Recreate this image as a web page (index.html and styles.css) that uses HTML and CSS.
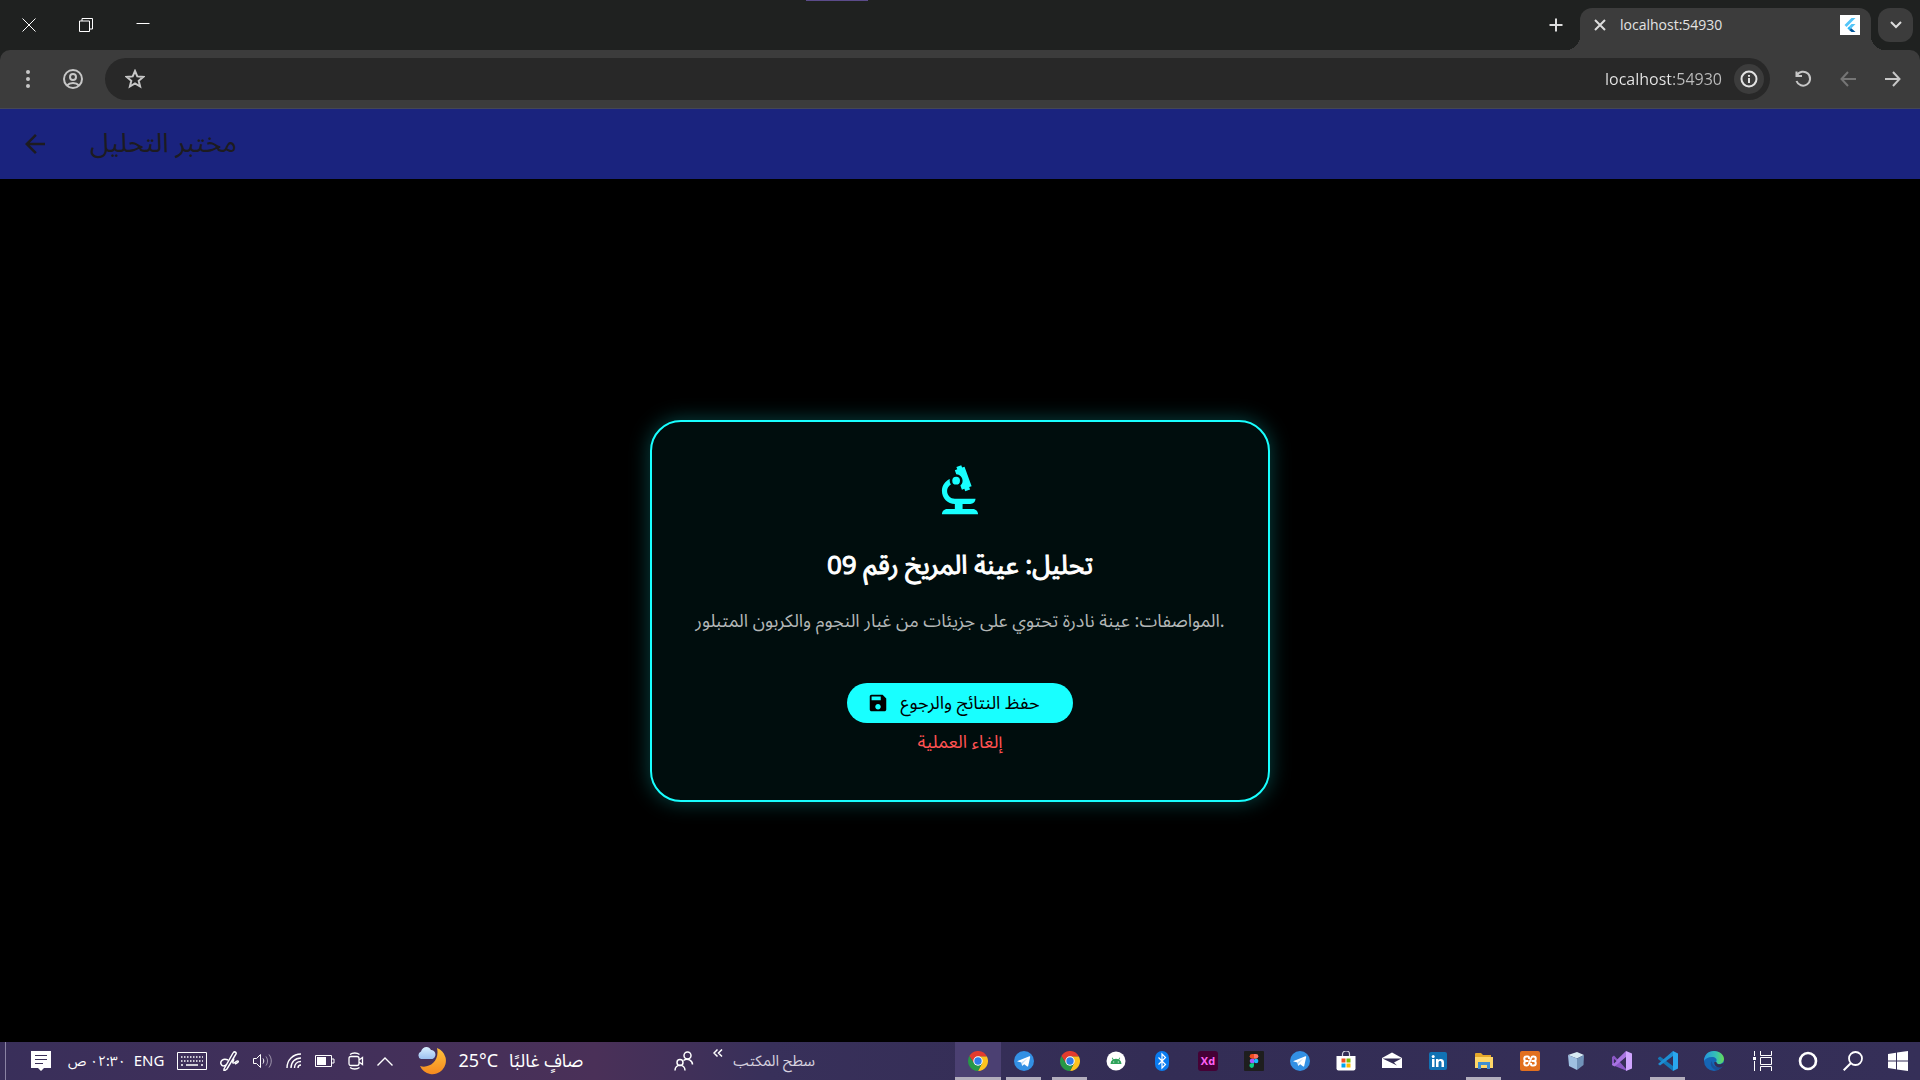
FILE: index.html
```html
<!DOCTYPE html>
<html lang="ar">
<head>
<meta charset="utf-8">
<title>مختبر التحليل</title>
<link rel="stylesheet" href="styles.css">
</head>
<body>
<svg class="defs" aria-hidden="true">
  <symbol id="chrome" viewBox="0 0 20 20">
    <path d="M10 5.4h8.9A10 10 0 0 0 1.34 5L6 12.3z" fill="#e33b2e"/>
    <path d="M14 12.3 10 20A10 10 0 0 0 18.9 5.4H10z" fill="#fcc31e"/>
    <path d="M6 12.3 1.34 5A10 10 0 0 0 10 20l4-7.700z" fill="#279847"/>
    <circle cx="10" cy="10" r="4.7" fill="#fff"/><circle cx="10" cy="10" r="3.7" fill="#2f7de8"/>
  </symbol>
  <symbol id="telegram" viewBox="0 0 20 20">
    <circle cx="10" cy="10" r="10" fill="#3390e4"/>
    <path d="M3.6 10 15.4 5.2c.5-.2.9.1.8.7l-2 9c-.1.6-.5.8-1 .5l-3-2.2-1.500 1.400c-.3.3-.6.2-.7-.2l-.7-3-3.600-.8c-.5-.1-.5-.4-.1-.6z" fill="#fff"/>
    <path d="m7.600 11.300 6-4.100-4.700 5-.3 1.900z" fill="#bfdcf5"/>
  </symbol>
</svg>

<header class="browser">
  <div class="titlebar">
    <button class="win" aria-label="إغلاق"><svg viewBox="0 0 14 14" width="14" height="14"><path d="M.5.5l13 13M13.500.5l-13 13"/></svg></button>
    <button class="win" aria-label="استعادة"><svg viewBox="0 0 14 14" width="14" height="14"><path d="M.5 3h10v10.500H.5zM3 3V.5h10.500V11h-3"/></svg></button>
    <button class="win" aria-label="تصغير"><svg viewBox="0 0 14 14" width="14" height="14"><path d="M.5 5.500h13"/></svg></button>
    <span class="accent"></span>
    <button class="newtab" aria-label="علامة تبويب جديدة"><svg viewBox="0 0 14 14" width="14" height="14"><path d="M7 .5v13M.5 7h13"/></svg></button>
    <div class="tab">
      <button class="tabclose" aria-label="إغلاق علامة التبويب"><svg viewBox="0 0 12 12" width="12" height="12"><path d="M1 1l10 10M11 1L1 11"/></svg></button>
      <span class="tabname">localhost:54930</span>
      <svg class="favicon" viewBox="0 0 20 20" width="20" height="20"><path fill="#fff" d="M0 0h20v20H0z"/><path fill="#54c5f8" d="M11.500 3h4L6.500 12l-2-2zM11.500 9h4l-4.200 4.200-2-2z"/><path fill="#29b6f6" d="m7.300 13.200 2-2 2 2-2 2z"/><path fill="#01579b" d="m9.300 15.200 2-2 4.200 3.800h-4z"/></svg>
    </div>
    <button class="tabsearch" aria-label="البحث في علامات التبويب"><svg viewBox="0 0 12 8" width="12" height="8"><path d="M1 1l5 5 5-5"/></svg></button>
  </div>
  <div class="toolbar">
    <button class="tool" aria-label="القائمة"><svg viewBox="0 0 20 20" width="20" height="20"><g fill="currentColor"><circle cx="10" cy="3" r="2"/><circle cx="10" cy="10" r="2"/><circle cx="10" cy="17" r="2"/></g></svg></button>
    <button class="tool" aria-label="الملف الشخصي"><svg class="line" viewBox="0 0 20 20" width="20" height="20"><circle cx="10" cy="10" r="9"/><circle cx="10" cy="8" r="3"/><path d="M4 16.500c3-3.300 9-3.300 12 0"/></svg></button>
    <div class="omnibox">
      <button class="star" aria-label="إضافة إشارة"><svg class="line" viewBox="0 0 20 20" width="20" height="20"><path d="m10 2 2.300 5.400 5.900.5-4.500 3.900 1.400 5.700-5.100-3.100-5.100 3.100 1.400-5.700L1.800 7.900l5.900-.5z"/></svg></button>
      <input class="url" aria-label="العنوان" dir="ltr" value="localhost:54930">
      <button class="info" aria-label="معلومات الموقع"><svg class="line" viewBox="0 0 18 18" width="18" height="18"><circle cx="9" cy="9" r="7.500"/><path d="M9 8v5M9 5v1.800"/></svg></button>
    </div>
    <button class="tool" aria-label="إعادة التحميل"><svg class="line" viewBox="0 0 18 18" width="18" height="18"><path d="M3 5.200A7 7 0 1 1 2.500 11M2.500 1.500v4.500H8"/></svg></button>
    <button class="tool dim" aria-label="التالي"><svg class="line" viewBox="0 0 16 16" width="16" height="16"><path d="M16 8H2M8 1L1.500 8 8 15"/></svg></button>
    <button class="tool" aria-label="رجوع"><svg class="line" viewBox="0 0 16 16" width="16" height="16"><path d="M0 8h14M8 1l6.500 7L8 15"/></svg></button>
  </div>
</header>

<header class="appbar">
  <button class="back" aria-label="رجوع"><svg viewBox="0 0 24 24" width="30" height="30"><path fill="currentColor" d="M20 11H7.830l5.590-5.590L12 4l-8 8 8 8 1.410-1.410L7.830 13H20z"/></svg></button>
  <h1>مختبر التحليل</h1>
</header>

<main class="lab">
  <section class="card">
    <svg class="biotech" viewBox="0 0 24 24" width="62" height="62" fill="currentColor"><path d="M7 19c-1.100 0-2 .9-2 2h14c0-1.100-.9-2-2-2h-4v-2h3c1.100 0 2-.9 2-2h-8c-1.660 0-3-1.340-3-3 0-1.090.59-2.040 1.460-2.560C8.170 9.030 8 8.540 8 8c0-.21.04-.42.09-.62C6.280 8.130 5 9.920 5 12c0 2.760 2.240 5 5 5v2H7z"/><path d="M10.560 5.510C11.910 5.540 13 6.640 13 8c0 .75-.33 1.410-.85 1.870l.59 1.620.94-.34.34.94 1.880-.68-.34-.94.94-.34L13.760 2.600l-.94.34L12.480 2l-1.880.68.34.94-.94.350.56 1.540z"/><circle cx="10.500" cy="8" r="1.500"/></svg>
    <h2>تحليل: عينة المريخ رقم 09</h2>
    <p>المواصفات: عينة نادرة تحتوي على جزيئات من غبار النجوم والكربون المتبلور.</p>
    <button class="save"><svg viewBox="0 0 24 24" width="22" height="22"><path fill="currentColor" d="M17 3H5c-1.110 0-2 .9-2 2v14c0 1.100.89 2 2 2h14c1.100 0 2-.9 2-2V7l-4-4zm-5 16c-1.660 0-3-1.340-3-3s1.340-3 3-3 3 1.340 3 3-1.340 3-3 3zm3-10H5V5h10v4z"/></svg><span>حفظ النتائج والرجوع</span></button>
    <button class="cancel">إلغاء العملية</button>
  </section>
</main>

<footer class="taskbar">
  <div class="tray">
    <button aria-label="الإشعارات"><svg viewBox="0 0 20 20" width="20" height="20"><path fill="#fff" d="M0 0h20v17h-7l-3 3-3-3H0z"/><path stroke="#3a2f58" d="M4 4.500h12M4 8.500h12M4 12.500h8"/></svg></button>
    <div class="clock"><time dir="rtl">٠٢:٣٠ ص</time><span>ENG</span></div>
    <button aria-label="لوحة المفاتيح"><svg class="thin" viewBox="0 0 30 18" width="30" height="18"><path d="M.5.5h29v17H.5z"/><path stroke-width="1.500" stroke-dasharray="1.500 1.500" d="M4 5h22M4 9h22"/><path stroke-width="1.500" d="M4 13h2M9 13h12M24 13h2"/></svg></button>
    <button aria-label="القلم"><svg class="thin" viewBox="0 0 20 20" width="20" height="20"><path stroke-width="1.500" d="M4 18 13 2c1-2 4-1 3 1L7 18l-3 2zM8 9c-5-2-8 1-7 4s4 2 6 0M13 7c2 1-1 4 0 5s4-3 5-2-1 2-3 3"/></svg></button>
    <button aria-label="الصوت"><svg class="thin" viewBox="0 0 20 16" width="20" height="16"><path d="M.5 5.500h3l4-4v13l-4-4h-3z"/><path d="M10 5.500c1 1.500 1 3.500 0 5"/><path opacity=".5" d="M13 3.500c2 3 2 6 0 9M16 1.500c3 4 3 9 0 13"/></svg></button>
    <button aria-label="الشبكة"><svg class="thin" viewBox="0 0 16 16" width="16" height="16"><path stroke-width="1.400" d="M1 15C1 7 7 1 15 1M5 15C5 9 9 5 15 5M8.500 15c0-4 2.500-6.500 6.500-6.500M12 15c0-2 1-3 3-3"/></svg></button>
    <button aria-label="البطارية"><svg class="thin" viewBox="0 0 20 12" width="20" height="12"><path d="M.5.5h16v11H.5zM17 4h2v4h-2"/><path fill="#fff" stroke="none" d="M2 2h9v8H2z"/></svg></button>
    <button aria-label="الكاميرا"><svg class="thin" viewBox="0 0 16 18" width="16" height="18"><path stroke-width="1.300" d="M3 4.500h6q2 0 2 2v5q0 2-2 2H3q-2 0-2-2v-5q0-2 2-2zM11 8l3.500-2.500v7L11 10M2 2.500c2.500-2 7-2 9.500 0M2 15.500c2.500 2 7 2 9.500 0"/></svg></button>
    <button aria-label="إظهار الرموز المخفية"><svg class="thin" viewBox="0 0 16 9" width="16" height="9"><path stroke-width="1.400" d="M.5 8.500 8 1l7.500 7.500"/></svg></button>
  </div>
  <button class="weather">
    <svg viewBox="0 0 30 30" width="30" height="30"><defs><linearGradient id="moon" x1="0" y1="0" x2="0" y2="1"><stop offset="0" stop-color="#ffc23c"/><stop offset="1" stop-color="#f58a1f"/></linearGradient><linearGradient id="cloud" x1="0" y1="0" x2="0" y2="1"><stop offset="0" stop-color="#d9efff"/><stop offset="1" stop-color="#9cc0f0"/></linearGradient></defs><path fill="url(#moon)" d="M20 2a13.500 13.500 0 1 1-17 18c9 3 20-5 17-18z"/><path fill="url(#cloud)" d="M4 13a4 4 0 0 1 0-7.500C5 .5 12-1 14 4c4-.5 6 5 3 8-1 1-2 1-3 1z"/></svg>
    <span>25°C</span><span class="sky" dir="rtl">صافٍ غالبًا</span>
  </button>
  <div class="desk">
    <button aria-label="الأشخاص"><svg class="thin" viewBox="0 0 20 20" width="20" height="20"><g stroke-width="1.500"><circle cx="13.500" cy="4.500" r="3.500"/><circle cx="6" cy="11.500" r="3"/><path d="M1 19.500c0-7 10-7 10 0M9.500 9.500c4-3 9 0 9 4"/></g></svg></button>
    <button class="more" aria-label="المزيد"><svg class="thin" viewBox="0 0 10 8" width="10" height="8"><path stroke-width="1.500" d="M4.500.5 1 4l3.500 3.500M9 .5 5.500 4 9 7.500"/></svg></button>
    <span>سطح المكتب</span>
  </div>
  <nav class="apps">
    <button class="open active" aria-label="Chrome"><svg width="20" height="20"><use href="#chrome"/></svg></button>
    <button class="open" aria-label="Telegram"><svg width="20" height="20"><use href="#telegram"/></svg></button>
    <button class="open" aria-label="Chrome 2"><svg width="20" height="20"><use href="#chrome"/></svg></button>
    <button aria-label="Android"><svg viewBox="0 0 20 20" width="20" height="20"><circle cx="10" cy="10" r="9.500" fill="#fff"/><path fill="#2fa35b" d="M4.500 13a5.500 5.500 0 0 1 2.200-4.400L5.800 7l.7-.4 1 1.600a6 6 0 0 1 5 0l1-1.600.7.4-.9 1.600a5.500 5.500 0 0 1 2.200 4.400z"/><path fill="#fff" d="M7.200 10.500h1v1h-1zM11.800 10.500h1v1h-1z"/></svg></button>
    <button aria-label="Bluetooth"><svg viewBox="0 0 20 20" width="20" height="20"><rect x="3" width="14" height="20" rx="7" fill="#0a7cf0"/><path fill="none" stroke="#fff" stroke-width="1.200" d="m6.500 6.500 7 7-3.500 3.500V3l3.500 3.500-7 7"/></svg></button>
    <button aria-label="Adobe XD"><svg viewBox="0 0 20 20" width="20" height="20"><rect width="20" height="20" rx="3" fill="#450135"/><text x="10" y="14" class="xd">Xd</text></svg></button>
    <button aria-label="Figma"><svg viewBox="0 0 20 20" width="20" height="20"><rect width="20" height="20" rx="1" fill="#1e1e1e"/><path fill="#f24e1e" d="M10 3H8a2.300 2.300 0 0 0 0 4.700h2z"/><path fill="#ff7262" d="M10 3h2a2.300 2.300 0 0 1 0 4.700h-2z"/><path fill="#a259ff" d="M10 7.700H8a2.300 2.300 0 0 0 0 4.600h2z"/><circle cx="12.100" cy="10" r="2.300" fill="#1abcfe"/><path fill="#0acf83" d="M10 12.300H8a2.300 2.300 0 1 0 2 2.300z"/></svg></button>
    <button aria-label="Telegram 2"><svg width="20" height="20"><use href="#telegram"/></svg></button>
    <button aria-label="Microsoft Store"><svg viewBox="0 0 20 20" width="20" height="20"><path fill="none" stroke="#d8d6e2" stroke-width="1.200" d="M6.500 5V3a3.500 3 0 0 1 7 0v2"/><path fill="#fff" d="M.5 5h19v12.500q0 2-2 2h-15q-2 0-2-2z"/><path fill="#f25022" d="M5.500 7.500h4v4h-4z"/><path fill="#7fba00" d="M10.500 7.500h4v4h-4z"/><path fill="#00a4ef" d="M5.500 12.500h4v4h-4z"/><path fill="#ffb900" d="M10.500 12.500h4v4h-4z"/></svg></button>
    <button aria-label="البريد"><svg viewBox="0 0 20 20" width="20" height="20"><path fill="#fff" d="m0 7 10-5.500L20 7v10H0z"/><path fill="#332d55" d="M.5 7.500h19L12 11.500l3 3z"/></svg></button>
    <button aria-label="LinkedIn"><svg viewBox="0 0 20 20" width="20" height="20"><rect x="1" y="1" width="18" height="18" rx="2" fill="#1172b4"/><path fill="#fff" d="M4 8h2.500v8H4zM8 8h2.400v1.200c1-1.900 5.600-2 5.600 2V16h-2.500v-4.200c0-2.300-3-2.200-3 0V16H8z"/><circle cx="5.200" cy="5.400" r="1.500" fill="#fff"/></svg></button>
    <button class="open" aria-label="مستكشف الملفات"><svg viewBox="0 0 20 20" width="20" height="20"><path fill="#e5a82b" d="M1 3q0-1 1-1h5l2 2h8v5H1z"/><path fill="#ffd767" d="M1 6h18v11H1z"/><path fill="#3f8fd2" d="M4 11h12v7h-3v-4H7v4H4z"/></svg></button>
    <button aria-label="XAMPP"><svg viewBox="0 0 20 20" width="20" height="20"><rect width="20" height="20" rx="2" fill="#e2701f"/><path fill="none" stroke="#fff" stroke-width="2" d="M9 8V6.500q0-1-1-1H6.500a2.200 2.200 0 0 0 0 4.500 2.200 2.200 0 0 0 0 4.500H7q1.200 0 1.800-1.500L11.200 7q.6-1.500 1.800-1.500h.5a2.200 2.200 0 0 1 0 4.500 2.200 2.200 0 0 1 0 4.500H12q-1 0-1-1V12M6.500 10h2M11.500 10h2"/></svg></button>
    <button aria-label="VirtualBox"><svg viewBox="0 0 20 20" width="20" height="20"><path fill="#d8ebf4" d="m2 4 9-3 7 3-7 3.500z"/><path fill="#9fc1e2" d="m2 4 9 3.500V19l-8-4z"/><path fill="#7193b9" d="m18 4-7 3.500V19l6.500-5z"/></svg></button>
    <button aria-label="Visual Studio"><svg viewBox="0 0 20 20" width="20" height="20"><path fill="#8b58c6" d="m0 6 2-1.500L15 19l-1 .5L1.500 14.500 0 14z"/><path fill="#d0a5ff" d="m14 0 6 2.500v15L14 20z"/><path fill="#a874e2" d="M14 0v6L2.500 15.500 0 14 0 13.500z"/><path fill="#382f5a" d="m2 8 2.500 2L2 12.500zM14 6.500v7L9.800 10z"/></svg></button>
    <button class="open" aria-label="VS Code"><svg viewBox="0 0 20 20" width="20" height="20"><path fill="#1478b8" d="m0 7 2-1.500L15 15v5L0 8z"/><path fill="#1d8fd4" d="M15 0v5L2 14.500 0 13z"/><path fill="#2aa7ee" d="m15 0 5 2.500v15L15 20z"/></svg></button>
    <button aria-label="Edge"><svg viewBox="0 0 20 20" width="20" height="20"><defs><linearGradient id="edge" x1="0" x2="1"><stop offset="0" stop-color="#2494e0"/><stop offset=".6" stop-color="#35c1b4"/><stop offset="1" stop-color="#66dc56"/></linearGradient></defs><circle cx="10" cy="10" r="10" fill="#1565b5"/><path fill="url(#edge)" d="M0 10C0 4 4 0 10 0c6 0 10 4 10 8 0 3-2.500 5-5 5-2 0-4-1-3-2 2-3-1-5-4-5-4 0-7 2-8 4z"/><path fill="#1b4f96" d="M8 10c-3 3 0 8 4 9 3 0 5-2 6.500-4-5 3-11 0-10.500-5z"/><path fill="#332d55" d="M12.500 11c0 3 5 3 7.300.5 0 1.500-.6 3-1.400 4-4 2.500-8.900-.5-8-4.500z"/></svg></button>
  </nav>
  <nav class="system">
    <button aria-label="عرض المهام"><svg class="thin" viewBox="0 0 20 20" width="20" height="20"><path d="M1.500 0v5M1.500 10v10M7.500 0v4.500h11V0M7.500 20v-4.500h11V20M7.500 6.500h11v7h-11z"/><path stroke-width="3" d="M1.500 6v3"/></svg></button>
    <button aria-label="Cortana"><svg class="thin" viewBox="0 0 20 20" width="20" height="20"><circle cx="10" cy="10" r="8" stroke-width="2.600"/></svg></button>
    <button aria-label="بحث"><svg class="thin" viewBox="0 0 20 20" width="20" height="20"><circle cx="12.500" cy="7.500" r="6.500" stroke-width="1.800"/><path stroke-width="2" d="M8 12 .7 19.300"/></svg></button>
    <button aria-label="ابدأ"><svg viewBox="0 0 20 20" width="20" height="20"><path fill="#fff" d="m0 3 8-1.200v7.700H0zM9 1.600 20 0v9.500H9zM0 10.500h8v7.700L0 17zM9 10.500h11V20L9 18.400z"/></svg></button>
  </nav>
</footer>
</body>
</html>
```
FILE: styles.css
```css
* { box-sizing: border-box; }
html, body { height: 100%; margin: 0; }
body {
  display: flex;
  flex-direction: column;
  background: #000;
  color: #fff;
  font-family: "Noto Sans Arabic", "Open Sans", "DejaVu Sans", sans-serif;
  direction: ltr;
}
.defs { position: absolute; width: 0; height: 0; }
button {
  display: flex;
  align-items: center;
  justify-content: center;
  margin: 0;
  padding: 0;
  border: 0;
  background: none;
  color: inherit;
  font: inherit;
}
svg { display: block; flex: none; }

/* Browser chrome */
.browser { background: #1f2120; }
.titlebar {
  position: relative;
  display: flex;
  align-items: flex-end;
  height: 50px;
  padding-right: 7px;
}
.win { width: 57px; height: 50px; }
.win svg { fill: none; stroke: #fff; }
.accent {
  position: absolute;
  top: 0;
  left: 42%;
  width: 62px;
  height: 1px;
  background: #5b4b8a;
}
.newtab { width: 48px; height: 50px; margin-left: auto; }
.newtab svg, .tabclose svg, .tabsearch svg { fill: none; stroke: #ddd; stroke-width: 2; }
.tab {
  position: relative;
  display: flex;
  align-items: center;
  width: 291px;
  height: 42px;
  padding: 0 11px 8px 14px;
  border-radius: 12px 12px 0 0;
  background: #3c3c3c;
}
.tab::before, .tab::after {
  content: "";
  position: absolute;
  bottom: 0;
  width: 14px;
  height: 14px;
}
.tab::before { right: 100%; background: radial-gradient(circle at 0 0, transparent 14px, #3c3c3c 14px); }
.tab::after { left: 100%; background: radial-gradient(circle at 100% 0, transparent 14px, #3c3c3c 14px); }
.tabclose { width: 12px; height: 20px; }
.tabname { margin-left: 14px; color: #e3e3e3; font: 14px/20px "Open Sans", sans-serif; }
.favicon { margin-left: auto; }
.tabsearch {
  z-index: 1;
  align-self: flex-start;
  width: 35px;
  height: 34px;
  margin: 8px 0 0 7px;
  border-radius: 12px;
  background: #3c3c3c;
}
.toolbar {
  display: flex;
  align-items: center;
  height: 59px;
  padding: 0 5px 1px 5px;
  border-bottom: 1px solid #454755;
  border-radius: 10px 10px 0 0;
  background: #3c3c3c;
  color: #c7c7c7;
}
.tool { width: 45px; height: 40px; }
.tool.dim { color: #757575; }
.line { fill: none; stroke: currentColor; stroke-width: 2; }
.omnibox {
  display: flex;
  flex: 1;
  align-items: center;
  height: 42px;
  margin: 0 10px;
  padding: 0 6px 0 20px;
  border-radius: 21px;
  background: #282828;
}
.url {
  flex: 1;
  min-width: 0;
  padding: 0 12px 0 0;
  border: 0;
  outline: 0;
  background: linear-gradient(90deg, #e8e8e8 calc(100% - 64px), #bdbdbd 0) text;
  -webkit-text-fill-color: transparent;
  font: 16px/24px "Open Sans", sans-serif;
  text-align: right;
}
.info { width: 30px; height: 30px; border-radius: 50%; background: #3c3c3c; color: #e3e3e3; }

/* Application */
.appbar {
  display: flex;
  align-items: center;
  gap: 40px;
  height: 70px;
  padding-left: 20px;
  background: #1a237e;
  color: #1d1b20;
}
.appbar h1 { margin: 0; font-size: 27px; font-weight: 400; line-height: 36px; }
.lab { display: flex; flex: 1; align-items: center; justify-content: center; }
.card {
  display: flex;
  flex-direction: column;
  align-items: center;
  min-width: min(620px, 100%);
  max-width: 100%;
  padding: 38px 37px;
  border: 2px solid #18ffff;
  border-radius: 31px;
  background: #000d0d;
  box-shadow: 0 0 20px 1px rgba(24, 255, 255, .25);
}
.biotech { color: #18ffff; }
.card h2 {
  margin: 25px 0 0;
  font-size: 26px;
  font-weight: 400;
  line-height: 38px;
  -webkit-text-stroke: 1px currentColor;
}
.card p { margin: 22px 0 0; color: #b3b7b7; font-size: 18px; line-height: 28px; }
.save {
  gap: 11px;
  height: 40px;
  margin-top: 48px;
  padding: 0 33px 0 20px;
  border-radius: 20px;
  background: #18ffff;
  color: #000;
  font-size: 18px;
}
.cancel { height: 39px; color: #ff5252; font-size: 18px; }

/* Taskbar */
.taskbar {
  display: flex;
  align-items: center;
  height: 38px;
  padding-left: 5px;
  background: linear-gradient(90deg, #392f5a, #43305a 20%, #4a3058 31%, #38305a 40%, #332d55 60%, #352f58);
}
.thin { fill: none; stroke: #fff; }
.tray {
  display: flex;
  align-items: center;
  gap: 13px;
  height: 100%;
  padding-left: 25px;
  border-left: 1px solid #8a83a3;
}
.clock { display: flex; align-items: center; gap: 8px; padding-left: 4px; font-size: 15px; white-space: nowrap; }
.clock time { font-size: 14px; }
.weather { gap: 11px; margin-left: 24px; font-size: 18px; white-space: nowrap; }
.desk { display: flex; align-items: center; gap: 10px; margin-left: 91px; color: #d5d0de; font-size: 15px; white-space: nowrap; }
.more { align-self: flex-start; margin: 4px 0 0 9px; }
.apps { display: flex; height: 100%; margin-left: auto; }
.apps button { position: relative; width: 46px; height: 100%; }
.apps .active { background: #4b4072; }
.apps .open::after {
  content: "";
  position: absolute;
  bottom: 0;
  left: 5px;
  right: 6px;
  height: 3px;
  background: #b3aebd;
}
.apps .active::after { left: 0; right: 0; }
.xd { fill: #ff61f6; font: bold 11px "Open Sans", sans-serif; text-anchor: middle; }
.system { display: flex; height: 100%; margin-left: 3px; }
.system button { width: 45px; }
```
